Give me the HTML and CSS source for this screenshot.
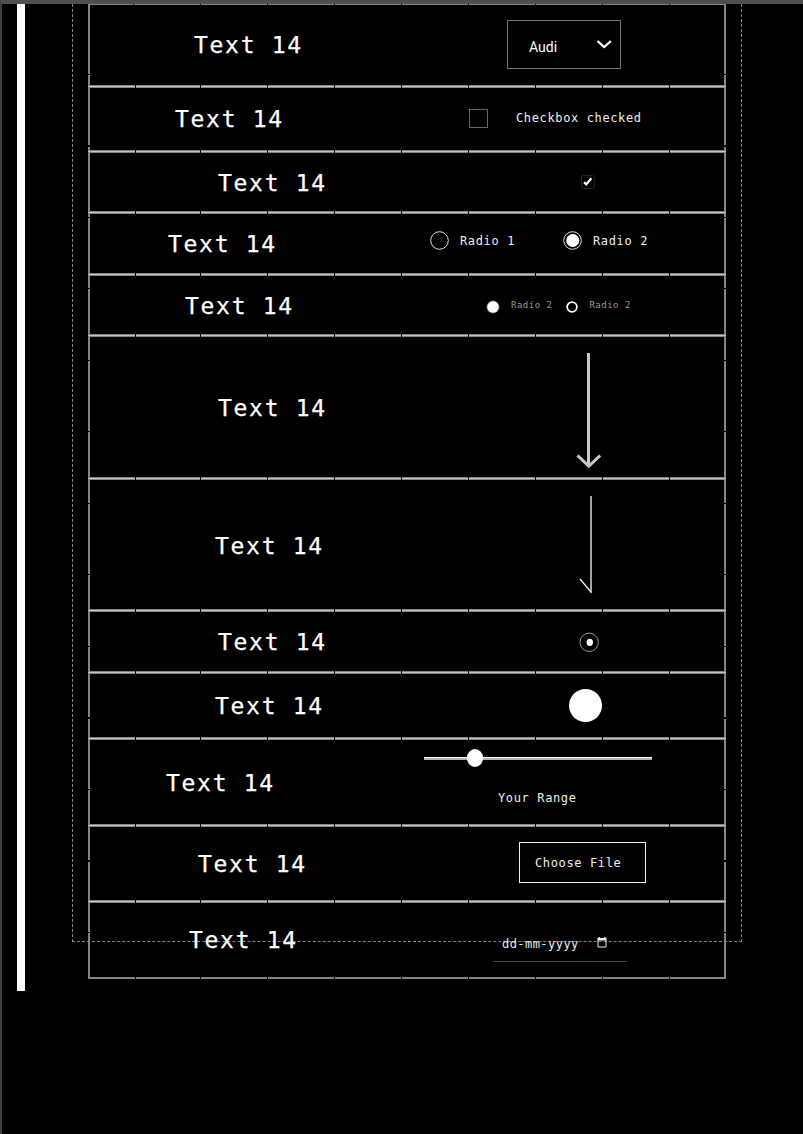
FILE: index.html
```html
<!DOCTYPE html>
<html lang="en">
<head>
<meta charset="utf-8">
<title>Form controls</title>
<link rel="stylesheet" href="styles.css">
</head>
<body>
<div class="page">
<div class="rail"></div>
<main class="frame">
<div class="table">
<div class="row r1"><span class="label">Text 14</span>
<div class="control select"><span>Audi</span><svg width="16" height="10" viewBox="0 0 16 10"><path d="M1.6 1.2 8.2 7 14.8 1.2" fill="none" stroke="#fff" stroke-width="2.2"/></svg></div></div>
<div class="row r2"><span class="label">Text 14</span>
<div class="control choice"><span class="box"></span><span class="small">Checkbox checked</span></div></div>
<div class="row r3"><span class="label">Text 14</span>
<svg class="control" width="14" height="14" viewBox="0 0 14 14"><rect x=".5" y=".5" width="12.6" height="13" rx="2" fill="none" stroke="#242424"/><path d="M3 7.2 5.2 9.4 10.4 3.2" fill="none" stroke="#fff" stroke-width="2.2"/></svg></div>
<div class="row r4"><span class="label">Text 14</span>
<div class="control radios"><svg width="19" height="19"><circle cx="9.5" cy="9.5" r="8.8" fill="none" stroke="#ddd"/></svg><span class="small first">Radio 1</span><svg width="19" height="19"><circle cx="9.5" cy="9.5" r="8.8" fill="none" stroke="#ddd"/><circle cx="9.8" cy="9.5" r="6.5" fill="#fff"/></svg><span class="small">Radio 2</span></div></div>
<div class="row r5"><span class="label">Text 14</span>
<div class="control mini"><svg width="14" height="14"><circle cx="7" cy="7" r="6.1" fill="#fff" stroke="#777" stroke-width=".7"/></svg><span class="tiny">Radio 2</span><svg class="second" width="14" height="14"><circle cx="7" cy="7" r="4.9" fill="none" stroke="#fff" stroke-width="1.8"/></svg><span class="tiny">Radio 2</span></div></div>
<div class="row r6"><span class="label">Text 14</span>
<svg class="control" width="26" height="116" viewBox="0 0 26 116"><path d="M12.5 0V113M1.5 102.5 12.8 113.2 24.2 102.5" fill="none" stroke="#c8c8c8" stroke-width="3"/></svg></div>
<div class="row r7"><span class="label">Text 14</span>
<svg class="control" width="14" height="98" viewBox="0 0 14 98"><path d="M12 0V97" stroke="#a4a4a4" stroke-width="2"/><path d="M1 83 12 96" stroke="#eee" stroke-width="1.3"/></svg></div>
<div class="row r8"><span class="label">Text 14</span>
<svg class="control" width="20" height="20"><circle cx="10.2" cy="10.3" r="9.2" fill="none" stroke="#999"/><ellipse cx="10.8" cy="10.3" rx="3.2" ry="3.6" fill="#fff"/></svg></div>
<div class="row r9"><span class="label">Text 14</span><span class="control disc"></span></div>
<div class="row r10"><span class="label">Text 14</span>
<div class="control range"><svg width="228" height="18"><path d="M0 8.5H228" stroke="#fff"/><path d="M0 10H228" stroke="#b4b4b4" stroke-width="2"/><ellipse cx="51" cy="9" rx="8.1" ry="8.9" fill="#fff"/></svg><span class="small">Your Range</span></div></div>
<div class="row r11"><span class="label">Text 14</span><div class="control file small">Choose File</div></div>
<div class="row r12"><span class="label">Text 14</span>
<div class="control date"><span>dd-mm-yyyy</span><svg width="10" height="11" viewBox="0 0 10 11"><path d="M1 3V10H9V3" fill="none" stroke="#eee"/><path d="M.5 1H9.5V3.6H.5ZM1.5 0H3V1H1.5ZM7 0H8.5V1H7Z" fill="#eee"/></svg></div></div>
</div>
</main>
</div>
</body>
</html>
```

FILE: styles.css
```css
* { box-sizing: border-box; }
html { background: #000; }
body {
  margin: 0;
  color: #fff;
  font-family: "DejaVu Sans Mono", monospace;
}
svg { display: block; flex: none; }
.page {
  display: flex;
  align-items: flex-start;
  height: 1134px;
  overflow: hidden;
  border-top: 4px solid #4c4f52;
  border-left: 2px solid #414141;
  background: #000;
}
.rail { width: 8px; height: 987px; margin-left: 15px; background: #fff; }
.frame {
  width: 670px;
  height: 938px;
  margin-left: 47px;
  padding: 0 15px;
  border: 1px dashed #858585;
  border-top: 0;
}
.table {
  width: 638px;
  height: 975px;
  background:
    repeating-linear-gradient(#000 0 1px, transparent 1px 71.5px) 0 70px no-repeat,
    linear-gradient(#858585, #858585) left / 2px 100% no-repeat,
    linear-gradient(#858585, #858585) right / 2px 100% no-repeat,
    linear-gradient(#858585, #858585) top / 100% 1px no-repeat;
}
.row {
  --black: linear-gradient(#000, #000);
  --line: linear-gradient(#858585 1px, #c4c4c4 1px 2px, #858585 2px);
  --ticks: linear-gradient(90deg, #000 1px, transparent 1px);
  display: grid;
  align-items: center;
  padding-bottom: 3px;
  background:
    var(--black) 47px bottom / 1px 3px no-repeat,
    var(--line) 45px bottom / 2px 3px no-repeat,
    var(--ticks) 45px bottom / 67px 3px repeat-x,
    var(--line) bottom / 100% 3px no-repeat;
}
.label, .control { grid-area: 1 / 1; justify-self: start; }
.label {
  margin-left: var(--label);
  padding-top: var(--drop, 0);
  font-size: 23px;
  line-height: 28px;
  letter-spacing: 1.7px;
  white-space: nowrap;
  -webkit-text-stroke: .25px #fff;
}
.control { align-self: start; margin: var(--top) 0 0 var(--left); }
.small {
  font-size: 12px;
  line-height: 16px;
  letter-spacing: .63px;
  white-space: nowrap;
  color: #eee;
}
.tiny {
  margin-top: -1px;
  font-size: 9px;
  line-height: 12px;
  letter-spacing: .5px;
  white-space: nowrap;
  color: #999;
}
.r1 { height: 84px; --label: 106px; --left: 419px; --top: 16px;
  background:
    var(--ticks) 45px top / 67px 1px repeat-x,
    var(--black) 47px bottom / 1px 3px no-repeat,
    var(--line) 45px bottom / 2px 3px no-repeat,
    var(--ticks) 45px bottom / 67px 3px repeat-x,
    var(--line) bottom / 100% 3px no-repeat; }
.r2 { height: 65px; --label: 87px; --left: 381px; --top: 21px; }
.r3 { height: 61px; --label: 130px; --drop: 2px; --left: 493px; --top: 22px; }
.r4 { height: 62px; --label: 80px; --left: 342px; --top: 17px; }
.r5 { height: 61px; --label: 97px; --drop: 2px; --left: 398px; --top: 24px; }
.r6 { height: 143px; --label: 130px; --drop: 2px; --left: 488px; --top: 16px; }
.r7 { height: 132px; --label: 127px; --drop: 2px; --left: 491px; --top: 16px; }
.r8 { height: 62px; --label: 130px; --left: 491px; --top: 20px; }
.r9 { height: 66px; --label: 127px; --left: 480px; --top: 15px; }
.r10 { height: 87px; --label: 78px; --drop: 2px; --left: 336px; --top: 9px; }
.r11 { height: 76px; --label: 110px; --left: 431px; --top: 15px; }
.r12 { height: 76px; --label: 101px; --left: 405px; --top: 33px;
  background:
    var(--black) 47px bottom / 1px 2px no-repeat,
    linear-gradient(#858585, #858585) 45px bottom / 2px 2px no-repeat,
    var(--ticks) 45px bottom / 67px 2px repeat-x,
    linear-gradient(#858585, #858585) bottom / 100% 2px no-repeat; }
.select {
  display: flex;
  align-items: center;
  justify-content: space-between;
  width: 114px;
  height: 49px;
  padding: 1px 8px 0 21px;
  border: 1px solid #777;
  font: 14px Roboto, sans-serif;
}
.select span { padding-top: 3px; }
.choice { display: flex; align-items: center; gap: 28px; }
.choice .small { margin-top: -2px; }
.box { width: 19px; height: 19px; border: 1px solid #666; }
.radios { display: flex; align-items: center; gap: 11px; }
.first { width: 92px; }
.mini { display: flex; gap: 11px; }
.second { margin-left: 2px; }
.mini .second + .tiny { margin-left: -1px; }
.disc { width: 33px; height: 33px; margin-left: calc(var(--left) + .5px); border-radius: 50%; background: #fff; }
.range { display: flex; flex-direction: column; gap: 23px; }
.range .small { margin-left: 74px; }
.file {
  display: flex;
  align-items: center;
  width: 127px;
  height: 41px;
  padding-left: 15px;
  border: 1px solid #eee;
}
.date {
  display: flex;
  align-items: flex-start;
  gap: 18px;
  width: 134px;
  height: 26px;
  padding-left: 9px;
  border-bottom: 1px solid #444;
  color: #eee;
  font-size: 12px;
  line-height: 17px;
  letter-spacing: .45px;
}
.date svg { margin-top: 1px; }
```
